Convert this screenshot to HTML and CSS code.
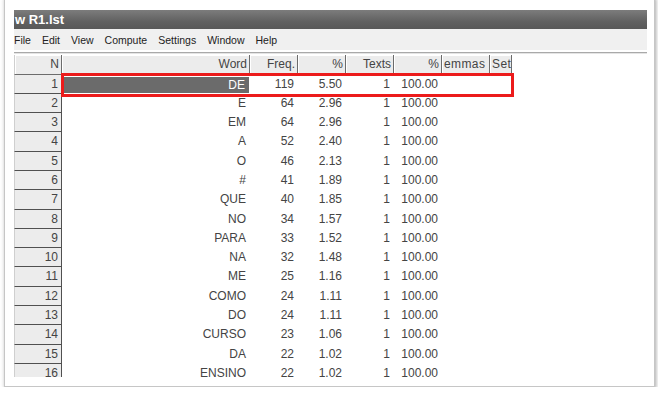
FILE: index.html
```html
<!DOCTYPE html>
<html>
  <head>
    <meta charset="UTF-8">
    <title>w R1.lst</title>
    <link rel="stylesheet" href="styles.css">
  </head>
  <body>
    <div class="shot">
      <div class="win">
        <div class="titlebar">w R1.lst</div>
        <div class="menubar">
          <span>File</span>
          <span>Edit</span>
          <span>View</span>
          <span>Compute</span>
          <span>Settings</span>
          <span>Window</span>
          <span>Help</span>
        </div>
        <div class="sep"></div>
        <div class="grid">
          <div class="row head">
            <div class="n">N</div>
            <div>Word</div>
            <div>Freq.</div>
            <div>%</div>
            <div>Texts</div>
            <div>%</div>
            <div class="clip">emmas</div>
            <div class="clip">Set</div>
          </div>
          <div class="row">
            <div class="n">1</div>
            <div class="sel">DE</div>
            <div>119</div>
            <div>5.50</div>
            <div>1</div>
            <div>100.00</div>
            <div></div>
            <div></div>
          </div>
          <div class="row"><div class="n">2</div><div>E</div><div>64</div><div>2.96</div><div>1</div><div>100.00</div><div></div><div></div></div>
          <div class="row"><div class="n">3</div><div>EM</div><div>64</div><div>2.96</div><div>1</div><div>100.00</div><div></div><div></div></div>
          <div class="row"><div class="n">4</div><div>A</div><div>52</div><div>2.40</div><div>1</div><div>100.00</div><div></div><div></div></div>
          <div class="row"><div class="n">5</div><div>O</div><div>46</div><div>2.13</div><div>1</div><div>100.00</div><div></div><div></div></div>
          <div class="row"><div class="n">6</div><div>#</div><div>41</div><div>1.89</div><div>1</div><div>100.00</div><div></div><div></div></div>
          <div class="row"><div class="n">7</div><div>QUE</div><div>40</div><div>1.85</div><div>1</div><div>100.00</div><div></div><div></div></div>
          <div class="row"><div class="n">8</div><div>NO</div><div>34</div><div>1.57</div><div>1</div><div>100.00</div><div></div><div></div></div>
          <div class="row"><div class="n">9</div><div>PARA</div><div>33</div><div>1.52</div><div>1</div><div>100.00</div><div></div><div></div></div>
          <div class="row"><div class="n">10</div><div>NA</div><div>32</div><div>1.48</div><div>1</div><div>100.00</div><div></div><div></div></div>
          <div class="row"><div class="n">11</div><div>ME</div><div>25</div><div>1.16</div><div>1</div><div>100.00</div><div></div><div></div></div>
          <div class="row"><div class="n">12</div><div>COMO</div><div>24</div><div>1.11</div><div>1</div><div>100.00</div><div></div><div></div></div>
          <div class="row"><div class="n">13</div><div>DO</div><div>24</div><div>1.11</div><div>1</div><div>100.00</div><div></div><div></div></div>
          <div class="row"><div class="n">14</div><div>CURSO</div><div>23</div><div>1.06</div><div>1</div><div>100.00</div><div></div><div></div></div>
          <div class="row"><div class="n">15</div><div>DA</div><div>22</div><div>1.02</div><div>1</div><div>100.00</div><div></div><div></div></div>
          <div class="row"><div class="n">16</div><div>ENSINO</div><div>22</div><div>1.02</div><div>1</div><div>100.00</div><div></div><div></div></div>
        </div>
        <div class="mark"></div>
      </div>
    </div>
  </body>
</html>
```

FILE: styles.css
```css
html, body {
  margin: 0;
  background: #fff;
  overflow: hidden;
}

.shot {
  box-sizing: border-box;
  width: 651px;
  height: 391px;
  margin: -4px 0 0 4px;
  padding: 13px 0 0 9px;
  background: #fff;
  border: 1px solid #c6c6c6;
  box-shadow: 1px 2px 4px rgba(0, 0, 0, 0.35);
}

.win {
  position: relative;
  width: 633px;
  font-family: "Liberation Sans", Arial, sans-serif;
}

.titlebar {
  height: 19px;
  line-height: 19px;
  padding-left: 1px;
  color: #fff;
  font-size: 13px;
  font-weight: bold;
  background: linear-gradient(#7c7c7c, #616161 60%, #585858);
}

.menubar {
  display: flex;
  align-items: center;
  gap: 11px;
  height: 21px;
  background: #f0f0f0;
  font-size: 10.5px;
  color: #222;
}

.sep {
  margin-top: 2px;
  height: 1px;
  border-top: 1px solid #a9a9a9;
  background: #e4e4e4;
}

.grid {
  margin-top: 1px;
  height: 322px;
  overflow: hidden;
  font-size: 12px;
  color: #444;
}

.row {
  display: grid;
  grid-template-columns: 48px 188px 48px 48px 48px 48px 48px 22px;
  height: 19.3px;
}

.row div {
  box-sizing: border-box;
  padding-right: 4px;
  text-align: right;
  line-height: 19.5px;
  white-space: nowrap;
  overflow: hidden;
}

.row.head {
  height: 19.5px;
}

.row.head div {
  background: #ececec;
  border-right: 1px solid #6c6c6c;
  border-bottom: 1px solid #6c6c6c;
  box-shadow: inset 1px 1px 0 #fff;
  padding-right: 2px;
}

.row.head .clip {
  text-align: left;
  padding: 0 0 0 2px;
  letter-spacing: 0.4px;
}

.row .n {
  background: #ececec;
  border-left: 1px solid #cfcfcf;
  border-right: 1px solid #505050;
  border-bottom: 1px solid #505050;
  padding-right: 3px;
}

.row .sel {
  background: #6b6b6b;
  color: #fff;
  margin: 2px 1px 1px 2px;
  line-height: 16px;
}

.mark {
  position: absolute;
  left: 47px;
  top: 63px;
  width: 453px;
  height: 24px;
  box-sizing: border-box;
  border: 3px solid #ec1b1b;
}
```
